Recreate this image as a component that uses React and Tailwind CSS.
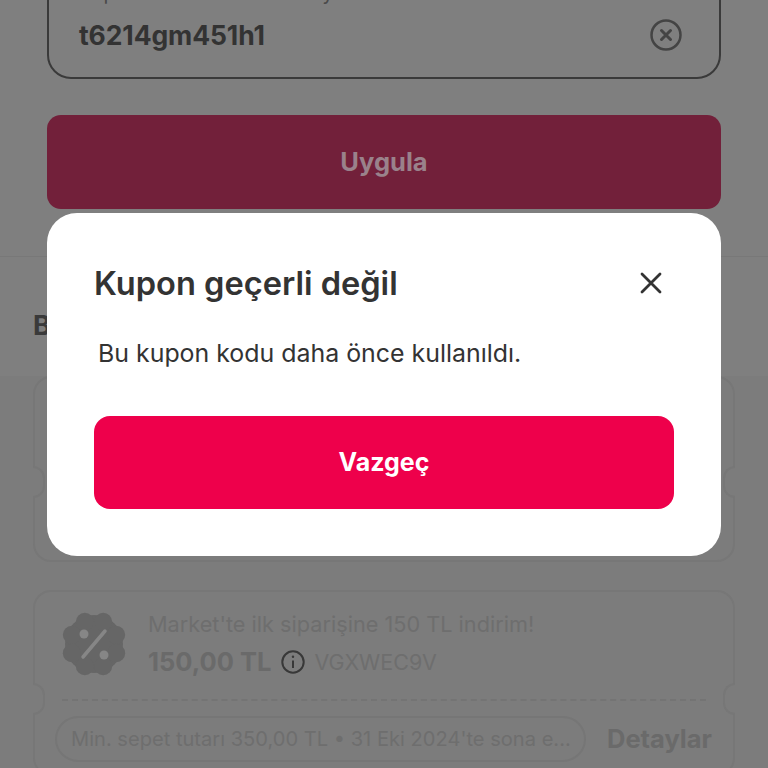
import React from "react";

const font = { fontFamily: "Inter, 'Liberation Sans', sans-serif" };

function Badge() {
  const lobes = [0, 45, 90, 135, 180, 225, 270, 315];
  return (
    <svg width="66" height="66" viewBox="0 0 66 66" className="mt-[-1px] shrink-0">
      <circle cx="33" cy="33" r="29" fill="#666666" />
      {lobes.map((a) => {
        const r = (a * Math.PI) / 180 + Math.PI / 8;
        return <circle key={a} cx={33 + 24 * Math.cos(r)} cy={33 + 24 * Math.sin(r)} r="9" fill="#666666" />;
      })}
      <circle cx="23" cy="23" r="4.5" fill="#868686" />
      <circle cx="43" cy="44" r="4.5" fill="#868686" />
      <path d="M44 20 L22 46" stroke="#868686" strokeWidth="3.5" strokeLinecap="round" />
    </svg>
  );
}

function Notch({ side, top }) {
  return side === "left" ? (
    <div className={`absolute left-[-2px] ${top} h-[32px] w-[12px] rounded-r-full border-2 border-l-0 border-[#777777] bg-[#7c7c7c]`} />
  ) : (
    <div className={`absolute right-[-2px] ${top} h-[32px] w-[12px] rounded-l-full border-2 border-r-0 border-[#777777] bg-[#7c7c7c]`} />
  );
}

export default function App() {
  return (
    <div className="relative h-[768px] w-[768px] overflow-hidden bg-[#7f7f7f]" style={font}>
      <div className="flex flex-col">
        <div className="mt-[-24px] flex flex-col gap-[36px] border-b border-[#787878] px-[47px] pb-[47px]">
          <div className="relative flex h-[103px] items-center justify-between rounded-[24px] border-2 border-[#3a3a3a] pl-[30px] pr-[37px] pt-[16px]">
            <span className="absolute left-[30px] top-[5px] text-[20px] leading-[20px] text-[#4a4a4a]">
              Kupon kodunu lütfen buraya
            </span>
            <span className="text-[26.5px] font-bold tracking-[-0.1px] text-[#333333]">t6214gm451h1</span>
            <svg width="32" height="32" viewBox="0 0 32 32" fill="none" stroke="#444444" className="mb-[2px]">
              <circle cx="16" cy="16" r="14.5" strokeWidth="2.5" />
              <path d="M11.5 11.5 L20.5 20.5 M20.5 11.5 L11.5 20.5" strokeWidth="3" strokeLinecap="round" />
            </svg>
          </div>
          <button className="flex h-[94px] items-center justify-center rounded-[14px] bg-[#72203a] pt-[1px] text-[25.5px] font-bold text-[#9a828b]">
            Uygula
          </button>
        </div>

        <div className="flex h-[119px] items-center px-[33px] pt-[20px] text-[27px] font-bold text-[#3a3a3a]">
          Bana özel kuponlar
        </div>

        <div className="flex flex-col gap-[28px] bg-[#7c7c7c] px-[33px]">
          <div className="relative h-[186px] rounded-[18px] border-2 border-[#777777]">
            <Notch side="left" top="top-[88px]" />
            <Notch side="right" top="top-[88px]" />
          </div>

          <div className="relative flex h-[186px] flex-col rounded-[18px] border-2 border-[#777777]">
            <div className="flex items-start gap-[21px] pl-[26px] pt-[20px]">
              <Badge />
              <div className="flex flex-col gap-[10px]">
                <span className="text-[21.7px] leading-[24px] text-[#6e6e6e]">Market'te ilk siparişine 150 TL indirim!</span>
                <div className="flex items-center">
                  <span className="text-[25.5px] font-bold leading-[32px] text-[#6a6a6a]">150,00 TL</span>
                  <svg width="24" height="24" viewBox="0 0 24 24" fill="none" stroke="#383838" className="ml-[10px]">
                    <circle cx="12" cy="12" r="10.7" strokeWidth="2" />
                    <path d="M12 10.5 V18" strokeWidth="2" />
                    <circle cx="12" cy="6.8" r="1.2" fill="#383838" stroke="none" />
                  </svg>
                  <span className="ml-[9px] text-[21.5px] text-[#6e6e6e]">VGXWEC9V</span>
                </div>
              </div>
            </div>
            <div className="mx-[27px] mt-[21px] border-t-2 border-dashed border-[#747474]" />
            <div className="mt-[15px] flex items-center pl-[20px]">
              <div className="flex h-[46px] w-[531px] items-center rounded-full border-2 border-[#767676] pl-[14px]">
                <span className="truncate text-[20.1px] text-[#6e6e6e]">Min. sepet tutarı 350,00 TL • 31 Eki 2024'te sona e...</span>
              </div>
              <span className="ml-[21px] text-[25.5px] font-bold text-[#6a6a6a]">Detaylar</span>
            </div>
            <Notch side="left" top="top-[91px]" />
            <Notch side="right" top="top-[91px]" />
          </div>
        </div>
      </div>

      <div className="absolute left-[47px] top-[213px] flex h-[343px] w-[674px] flex-col rounded-[30px] bg-white px-[47px] pt-[49px]">
        <div className="flex items-center justify-between">
          <span className="text-[32.6px] font-semibold leading-[42px] text-[#333333]">Kupon geçerli değil</span>
          <svg width="22" height="22" viewBox="0 0 22 22" fill="none" stroke="#333333" className="mr-[12px]">
            <path d="M2 2 L20 20 M20 2 L2 20" strokeWidth="2.8" strokeLinecap="round" />
          </svg>
        </div>
        <p className="mt-[33px] pl-[4px] text-[24.9px] leading-[32px] text-[#333333]">Bu kupon kodu daha önce kullanıldı.</p>
        <button className="mt-[47px] flex h-[93px] items-center justify-center rounded-[16px] bg-[#ee004b] text-[25px] font-bold text-white">
          Vazgeç
        </button>
      </div>
    </div>
  );
}
